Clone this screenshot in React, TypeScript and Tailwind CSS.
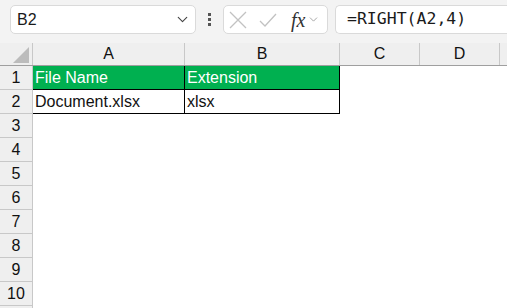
import { ChevronDown } from "lucide-react";

const cols = [
  { key: "A", w: "w-[152px]" },
  { key: "B", w: "w-[155px]" },
  { key: "C", w: "w-[80px]" },
  { key: "D", w: "w-[80px]" },
  { key: "", w: "w-[80px]" },
];

const rows = [1, 2, 3, 4, 5, 6, 7, 8, 9, 10];

function FormulaBar() {
  return (
    <div className="flex h-[43px] items-start bg-[#f3f3f3] pt-[5px] pl-[10px]">
      <div className="flex h-[29px] w-[186px] items-center justify-between rounded-[5px] border border-[#dadada] bg-white pr-[4px] pl-[6px]">
        <span className="text-[16px] text-[#1a1a1a]">B2</span>
        <ChevronDown className="h-[17px] w-[17px] text-[#444]" strokeWidth={1.6} />
      </div>
      <div className="flex h-[29px] w-[27px] flex-col items-center justify-center gap-[2px]">
        <span className="h-[3px] w-[3px] bg-[#555]" />
        <span className="h-[3px] w-[3px] bg-[#555]" />
        <span className="h-[3px] w-[3px] bg-[#555]" />
      </div>
      <div className="flex h-[29px] w-[105px] items-center rounded-[5px] border border-[#dadada] bg-white pl-[4px]">
        <svg width="20" height="20" viewBox="0 0 20 20" className="shrink-0">
          <path d="M2 2 L18 18 M18 2 L2 18" stroke="#c2c2c2" strokeWidth="1.3" fill="none" />
        </svg>
        <svg width="20" height="20" viewBox="0 0 20 20" className="ml-[10px] shrink-0">
          <path d="M2 11 L7 16 L18 4" stroke="#c2c2c2" strokeWidth="1.3" fill="none" />
        </svg>
        <span
          className="ml-[13px] text-[20px] italic leading-none text-[#333]"
          style={{ fontFamily: '"Liberation Serif", serif' }}
        >
          fx
        </span>
        <ChevronDown className="ml-[2px] h-[13px] w-[13px] text-[#999]" strokeWidth={1.6} />
      </div>
      <div className="ml-[7px] flex h-[29px] flex-1 items-center rounded-l-[5px] border border-r-0 border-[#dadada] bg-white pl-[11px]">
        <span
          className="text-[16.5px] text-[#1a1a1a]"
          style={{ fontFamily: '"DejaVu Sans Mono", monospace' }}
        >
          =RIGHT(A2,4)
        </span>
      </div>
    </div>
  );
}

function cellContent(r: number, c: string) {
  if (r === 1 && c === "A") return "File Name";
  if (r === 1 && c === "B") return "Extension";
  if (r === 2 && c === "A") return "Document.xlsx";
  if (r === 2 && c === "B") return "xlsx";
  return "";
}

export default function App() {
  return (
    <div
      className="h-[308px] w-[507px] overflow-hidden bg-white"
      style={{ fontFamily: '"Liberation Sans", Arial, sans-serif' }}
    >
      <FormulaBar />
      <div className="flex h-[23px] border-b border-[#9f9f9f] bg-[#efefef]">
        <div className="flex w-[33px] shrink-0 items-end justify-end border-r border-[#c8c8c8] pr-[3px] pb-[2px]">
          <svg width="16" height="16" viewBox="0 0 16 16">
            <path d="M16 0 L16 16 L0 16 Z" fill="#bcbcbc" />
          </svg>
        </div>
        {cols.map((c, i) => (
          <div
            key={i}
            className={`${c.w} flex shrink-0 items-center justify-center border-r border-[#c8c8c8] text-[16px] text-[#111]`}
          >
            {c.key}
          </div>
        ))}
      </div>
      {rows.map((r) => (
        <div key={r} className="flex h-[24px]">
          <div className="flex w-[33px] shrink-0 items-center justify-center border-r border-b border-[#c8c8c8] bg-[#efefef] text-[16px] text-[#111]">
            {r}
          </div>
          {cols.map((c, i) => {
            const inTable = r <= 2 && i < 2;
            const header = r === 1 && inTable;
            return (
              <div
                key={i}
                className={
                  inTable
                    ? `${c.w} flex shrink-0 items-center border-r border-b border-black px-[2px] text-[16px] ${
                        header ? "bg-[#00b050] text-white" : "bg-white text-[#111]"
                      }`
                    : `${c.w} shrink-0 bg-white`
                }
              >
                {cellContent(r, c.key)}
              </div>
            );
          })}
        </div>
      ))}
      <div className="flex h-[24px]">
        <div className="w-[33px] shrink-0 border-r border-[#c8c8c8] bg-[#efefef]" />
      </div>
    </div>
  );
}
